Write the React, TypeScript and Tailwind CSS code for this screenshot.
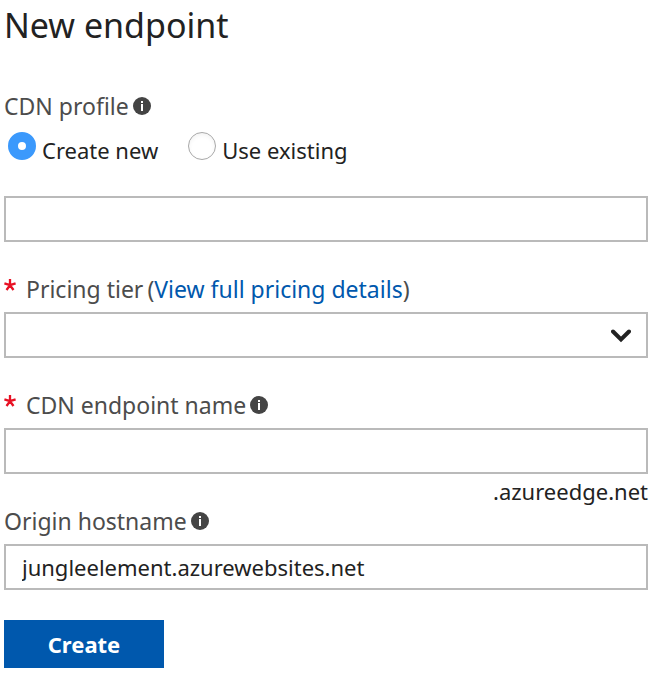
import React, { useState } from 'react';

const InfoIcon: React.FC = () => (
  <svg viewBox="0 0 18 18" className="ml-1 h-[18px] w-[18px] shrink-0" aria-hidden="true">
    <circle cx="9" cy="9" r="9" fill="#444444" />
    <rect x="8" y="4" width="2" height="2" fill="#fff" />
    <rect x="8" y="7" width="2" height="7" fill="#fff" />
  </svg>
);

const Required: React.FC = () => (
  <svg viewBox="0 0 12 12" className="mr-2.5 mb-2 h-3 w-3 shrink-0" aria-hidden="true">
    <path d="M6 6.2V0M6 6.2L0.4 4.4M6 6.2L11.6 4.4M6 6.2L2.5 11M6 6.2L9.5 11" stroke="#e81123" strokeWidth="2.3" />
  </svg>
);

const fieldClass =
  'block h-[46px] w-full appearance-none rounded-none border-2 border-[#bababa] bg-white px-4 text-[22px] text-[#222222] outline-none focus:border-[#0058ad]';
const labelClass = 'flex h-8 items-center text-[23px] text-[#4c4c4c]';
const radioClass =
  'm-0 h-7 w-7 shrink-0 appearance-none rounded-full border border-[#a8a8a8] bg-white inset-shadow-sm checked:border-10 checked:border-[#3b99fc] checked:inset-shadow-none';

const App: React.FC = () => {
  const [profile, setProfile] = useState('new');
  const [hostname, setHostname] = useState('jungleelement.azurewebsites.net');

  return (
    <form
      className="bg-white pr-1.5 pl-1 font-['Noto_Sans',sans-serif] text-[#222222]"
      onSubmit={(e) => e.preventDefault()}
    >
      <h1 className="text-[34px] leading-[50px]">New endpoint</h1>

      <fieldset className="mt-10">
        <legend className={labelClass}>
          CDN profile
          <InfoIcon />
        </legend>
        <div className="mt-2.5 flex gap-[30px] pl-1 text-[22px] leading-9">
          <label className="flex items-start gap-1.5">
            <input
              type="radio"
              name="profile"
              className={radioClass}
              checked={profile === 'new'}
              onChange={() => setProfile('new')}
            />
            Create new
          </label>
          <label className="flex items-start gap-1.5">
            <input
              type="radio"
              name="profile"
              className={radioClass}
              checked={profile === 'existing'}
              onChange={() => setProfile('existing')}
            />
            Use existing
          </label>
        </div>
      </fieldset>
      <input type="text" aria-label="CDN profile name" className={`mt-7 ${fieldClass}`} />

      <div className={`mt-[31px] mb-[7px] ${labelClass}`}>
        <Required />
        <label htmlFor="tier">Pricing tier</label>
        <span className="ml-1">
          (<a href="#pricing" className="text-[#0058ad]">View full pricing details</a>)
        </span>
      </div>
      <div className="relative">
        <select id="tier" defaultValue="" className={fieldClass}>
          <option value=""></option>
        </select>
        <svg
          viewBox="0 0 20 14"
          className="pointer-events-none absolute top-[17px] right-[17px] h-3.5 w-5"
          fill="none"
          stroke="#222222"
          strokeWidth="4"
          aria-hidden="true"
        >
          <path d="M2 2.5L10 10.5L18 2.5" strokeLinecap="round" />
        </svg>
      </div>

      <label htmlFor="endpoint" className={`mt-[31px] mb-[7px] ${labelClass}`}>
        <Required />
        CDN endpoint name
        <InfoIcon />
      </label>
      <input id="endpoint" type="text" className={fieldClass} />
      <div className="h-[31px] text-right text-[22px] leading-[34px]">.azureedge.net</div>

      <label htmlFor="hostname" className={`mb-[7px] ${labelClass}`}>
        Origin hostname
        <InfoIcon />
      </label>
      <input
        id="hostname"
        type="text"
        value={hostname}
        onChange={(e) => setHostname(e.target.value)}
        className={fieldClass}
      />

      <button type="submit" className="mt-[30px] h-12 w-40 bg-[#0058ad] text-[22px] font-bold text-white">
        Create
      </button>
    </form>
  );
};

export default App;
